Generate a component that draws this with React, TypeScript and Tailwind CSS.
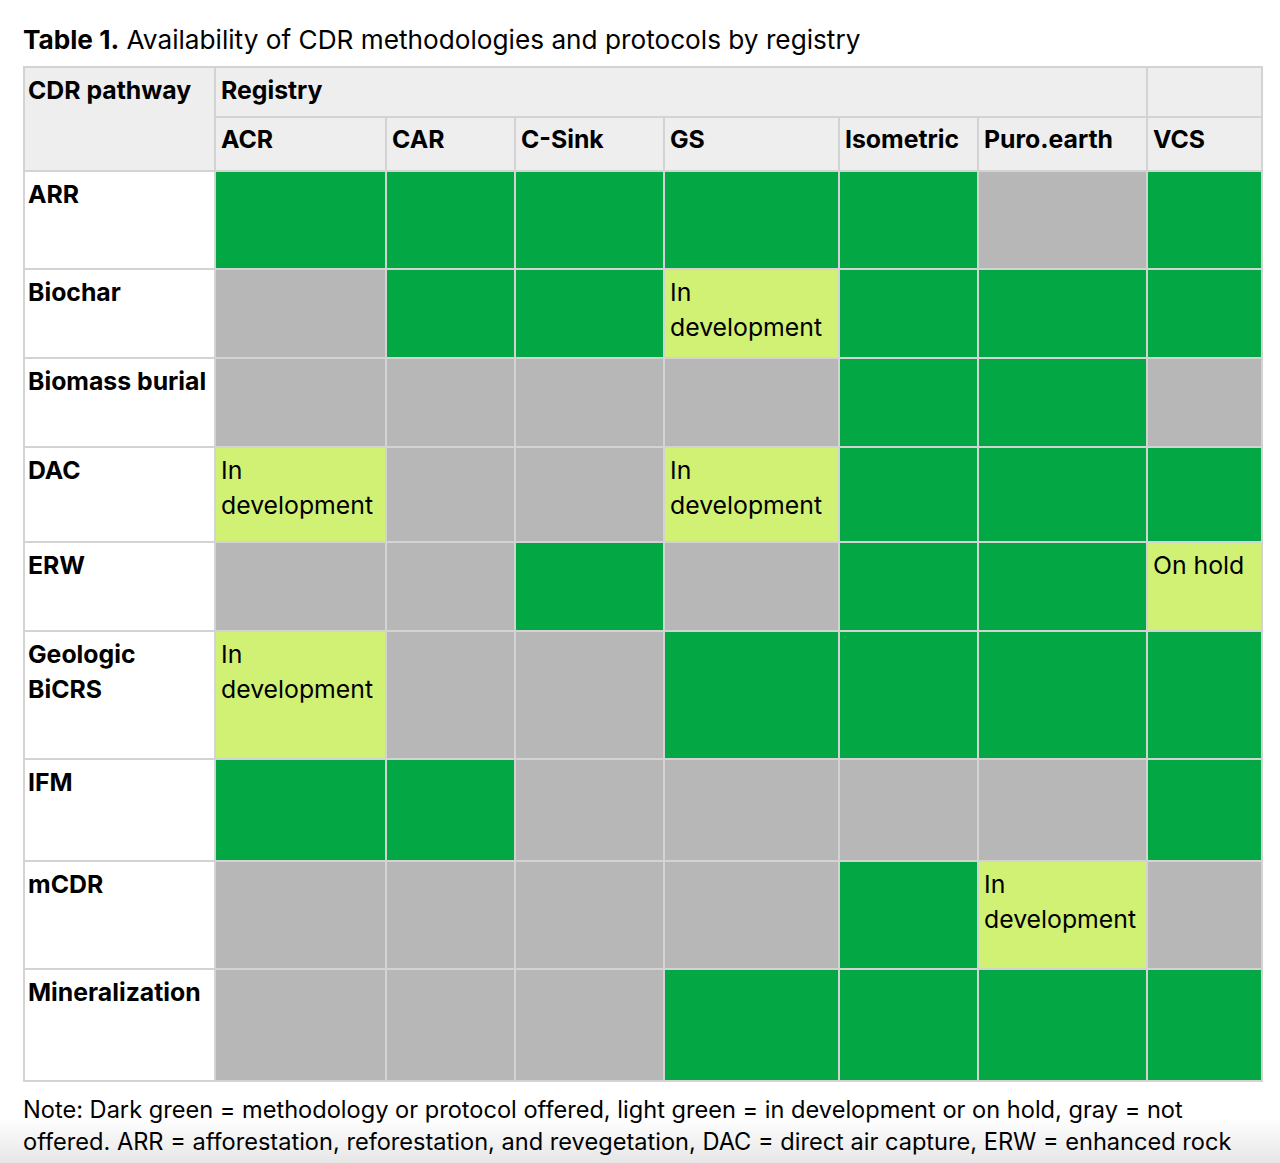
const cols = [
  { name: "ACR", w: "w-[171px]" },
  { name: "CAR", w: "w-[129px]" },
  { name: "C-Sink", w: "w-[149px]" },
  { name: "GS", w: "w-[175px]" },
  { name: "Isometric", w: "w-[139px]" },
  { name: "Puro.earth", w: "w-[169px]" },
  { name: "VCS", w: "w-[115px]" },
];

// g = offered, x = not offered, d = in development, h = on hold
const rows = [
  { label: "ARR", h: "h-[98px]", cells: "gggggxg" },
  { label: "Biochar", h: "h-[89px]", cells: "xggdggg" },
  { label: "Biomass burial", h: "h-[89px]", cells: "xxxxggx" },
  { label: "DAC", h: "h-[95px]", cells: "dxxdggg" },
  { label: "ERW", h: "h-[89px]", cells: "xxgxggh" },
  { label: "Geologic BiCRS", h: "h-[128px]", cells: "dxxgggg" },
  { label: "IFM", h: "h-[102px]", cells: "ggxxxxg" },
  { label: "mCDR", h: "h-[108px]", cells: "xxxxgdx" },
  { label: "Mineralization", h: "h-[112px]", cells: "xxxgggg" },
];

const cellBg: Record<string, string> = {
  g: "bg-[#03a743]",
  x: "bg-[#b7b7b7]",
  d: "bg-[#d1f174]",
  h: "bg-[#d1f174]",
};

const cellText: Record<string, string> = {
  d: "In development",
  h: "On hold",
};

const td = "border-2 border-[#d3d3d3] align-top px-[5px] pt-[5px]";

export default function App() {
  return (
    <div
      className="h-[1163px] overflow-hidden bg-[linear-gradient(to_bottom,#ffffff_1118px,#e6e6e6_1163px)] px-[23px] pt-[22px] text-black"
      style={{ fontFamily: "Inter, 'Liberation Sans', sans-serif" }}
    >
      <h1 className="text-[26.2px] leading-[36px] mb-[8px]">
        <span className="font-bold">Table 1.</span> Availability of CDR methodologies and protocols by registry
      </h1>

      <table className="table-fixed border-collapse w-[1238px] text-[24.8px] leading-[35px]">
        <colgroup>
          <col className="w-[191px]" />
          {cols.map((c) => (
            <col key={c.name} className={c.w} />
          ))}
        </colgroup>
        <thead className="bg-[#eeeeee] font-bold">
          <tr className="h-[50px]">
            <th rowSpan={2} className={`${td} !pl-[3px] text-left`}>CDR pathway</th>
            <th colSpan={6} className={`${td} text-left`}>Registry</th>
            <th className={td}></th>
          </tr>
          <tr className="h-[54px]">
            {cols.map((c) => (
              <th key={c.name} className={`${td} !pt-[4px] text-left`}>{c.name}</th>
            ))}
          </tr>
        </thead>
        <tbody>
          {rows.map((r) => (
            <tr key={r.label} className={r.h}>
              <td className={`${td} !pl-[3px] font-bold bg-white`}>{r.label}</td>
              {r.cells.split("").map((c, i) => (
                <td key={i} className={`${td} ${cellBg[c]}`}>
                  {cellText[c] ?? ""}
                </td>
              ))}
            </tr>
          ))}
        </tbody>
      </table>

      <p className="mt-[12px] text-[23.6px] leading-[32px] w-[1240px]">
        Note: Dark green = methodology or protocol offered, light green = in development or on hold, gray = not offered. ARR = afforestation, reforestation, and revegetation, DAC = direct air capture, ERW = enhanced rock
      </p>
    </div>
  );
}
